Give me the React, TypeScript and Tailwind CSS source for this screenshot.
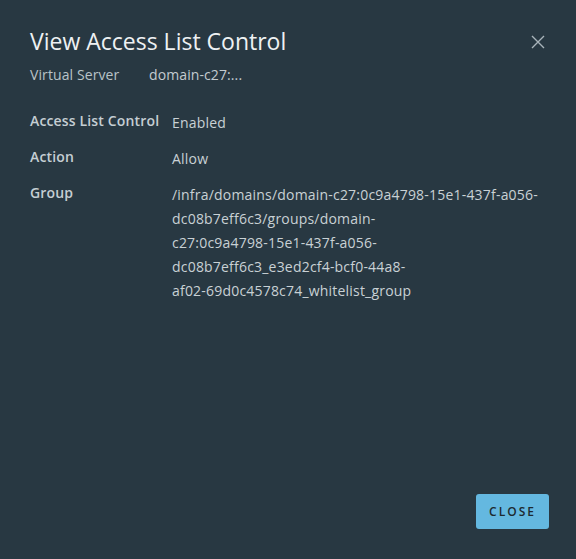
const groupLines = [
  "/infra/domains/domain-c27:0c9a4798-15e1-437f-a056-",
  "dc08b7eff6c3/groups/domain-",
  "c27:0c9a4798-15e1-437f-a056-",
  "dc08b7eff6c3_e3ed2cf4-bcf0-44a8-",
  "af02-69d0c4578c74_whitelist_group",
];

const labelClass =
  "w-[142px] shrink-0 text-[14px] font-semibold leading-[24px] tracking-[0.15px] text-[#c5ced3]";
const valueClass = "pt-[2px] text-[14px] leading-[24px] tracking-[0.2px] text-[#c9d1d5]";

export default function App() {
  return (
    <div
      className="flex h-[559px] w-[576px] flex-col bg-[#283842] pb-[30px] pl-[30px] pr-[27px] pt-[26px]"
      style={{ fontFamily: "'Open Sans', Lato, sans-serif" }}
    >
      <div className="flex items-start justify-between">
        <h1 className="text-[23px] leading-[30px] font-normal text-[#eef1f3]">
          View Access List Control
        </h1>
        <button className="mr-[3px] mt-[8px] text-[#a9b4ba]" aria-label="Close">
          <svg width="16" height="16" viewBox="0 0 16 16" fill="none" stroke="currentColor" strokeWidth="1.4">
            <path d="M2 2L14 14M14 2L2 14" />
          </svg>
        </button>
      </div>

      <div className="mt-[7px] flex text-[14px] leading-[24px] tracking-[0.1px] text-[#b9c3c8]">
        <span className="w-[119px]">Virtual Server</span>
        <span className="text-[#c3cbd0]">domain-c27:...</span>
      </div>

      <div className="mt-[22px] grid gap-y-[10px]">
        <div className="flex">
          <span className={labelClass}>Access List Control</span>
          <span className={valueClass}>Enabled</span>
        </div>
        <div className="flex">
          <span className={labelClass}>Action</span>
          <span className={valueClass}>Allow</span>
        </div>
        <div className="flex">
          <span className={labelClass}>Group</span>
          <span className={valueClass}>
            {groupLines.map((line) => (
              <span key={line} className="block">
                {line}
              </span>
            ))}
          </span>
        </div>
      </div>

      <div className="mt-auto flex justify-end">
        <button className="h-[35px] w-[73px] rounded-[3px] bg-[#64b8e0] text-[12px] font-semibold tracking-[2px] text-[#1d2a31]">
          CLOSE
        </button>
      </div>
    </div>
  );
}
